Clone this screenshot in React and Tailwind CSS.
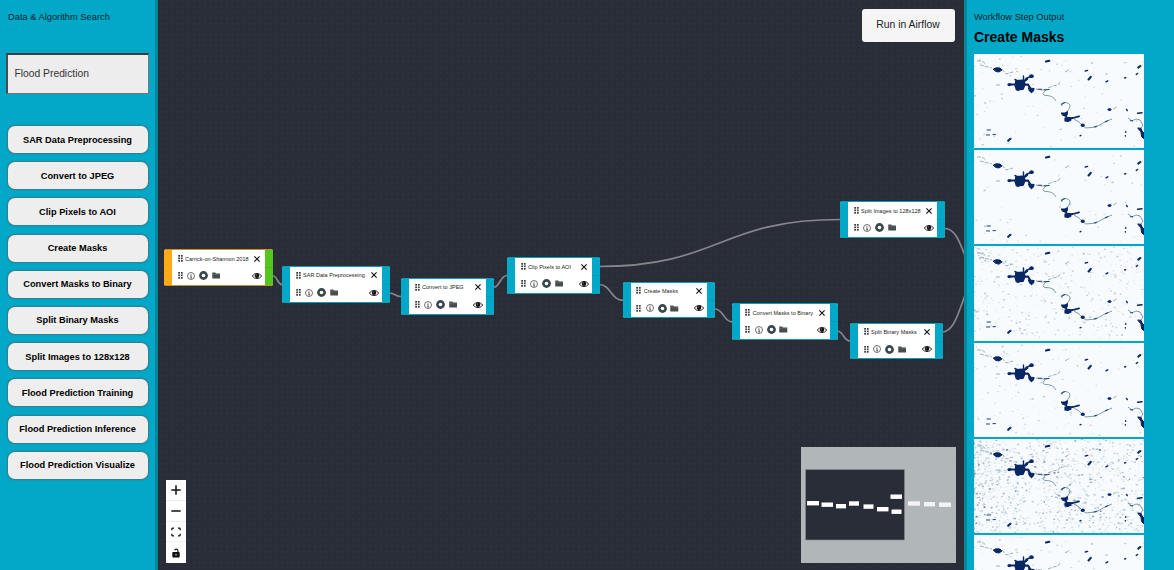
import React from "react";

const steps = [
  "SAR Data Preprocessing",
  "Convert to JPEG",
  "Clip Pixels to AOI",
  "Create Masks",
  "Convert Masks to Binary",
  "Split Binary Masks",
  "Split Images to 128x128",
  "Flood Prediction Training",
  "Flood Prediction Inference",
  "Flood Prediction Visualize",
];

// Positions are relative to the workflow canvas.
const nodes = [
  { label: "Carrick-on-Shannon 2018", x: 6, y: 249.3, w: 109, source: true },
  { label: "SAR Data Preprocessing", x: 124, y: 266, w: 107.5 },
  { label: "Convert to JPEG", x: 243, y: 278, w: 92.5 },
  { label: "Clip Pixels to AOI", x: 349, y: 257.3, w: 92.5 },
  { label: "Create Masks", x: 464.7, y: 281.7, w: 92.5 },
  { label: "Convert Masks to Binary", x: 573.5, y: 303.3, w: 106 },
  { label: "Split Images to 128x128", x: 682, y: 201.3, w: 105 },
  { label: "Split Binary Masks", x: 692, y: 322.7, w: 92.5 },
];

const edges = [
  [115, 276, 124, 284.5],
  [231, 293, 243, 296.5],
  [335, 287.5, 349, 275.5],
  [441, 266.5, 682, 219.5],
  [441, 284.5, 465, 300.3],
  [557, 309, 574, 321.8],
  [679, 331, 692, 341],
  [787, 228.5, 824, 275],
  [784, 332, 824, 275],
];

function edgePath([x1, y1, x2, y2]) {
  const m = (x1 + x2) / 2;
  return `M${x1} ${y1}C${m} ${y1} ${m} ${y2} ${x2} ${y2}`;
}

function Grip() {
  return (
    <svg viewBox="0 0 5 7" className="h-[7px] w-[5px] shrink-0" fill="#3b4144">
      {[0, 2.5, 5].map((y) => (
        <g key={y}>
          <rect x="0.2" y={y} width="1.8" height="1.7" />
          <rect x="2.9" y={y} width="1.8" height="1.7" />
        </g>
      ))}
    </svg>
  );
}

function Node({ node }) {
  const { label, x, y, w, source } = node;
  return (
    <div
      className={`absolute flex h-[36.5px] overflow-hidden rounded-[2px] border-y bg-white ${source ? "border-[#c98f2a]" : "border-[#059fb8]"}`}
      style={{ left: x, top: y, width: w }}
    >
      <div className={`w-2 shrink-0 ${source ? "bg-[#fcab17]" : "bg-[#02a8c7]"}`} />
      <div className="flex min-w-0 flex-1 flex-col pr-[5px] pl-[5.5px]">
        <div className="flex h-[17.5px] items-center">
          <Grip />
          <span className="ml-[2.5px] text-[5.5px] leading-[8px] tracking-[0.005em] whitespace-nowrap text-[#222]">{label}</span>
          <svg viewBox="0 0 6 6" className="ml-auto h-[6px] w-[6px] shrink-0" stroke="#111" strokeWidth="1.1">
            <path d="M0.4 0.4L5.6 5.6M5.6 0.4L0.4 5.6" />
          </svg>
        </div>
        <div className="flex h-[19px] items-center">
          <Grip />
          <svg viewBox="0 0 8 8" className="ml-[4.5px] h-2 w-2 shrink-0">
            <circle cx="4" cy="4" r="3.5" fill="#fff" stroke="#4a4f51" strokeWidth="0.8" />
            <path d="M3.4 3.5H4.1V5.8M3.2 5.9H5M4 1.8V2.6" fill="none" stroke="#333" strokeWidth="0.8" />
          </svg>
          <svg viewBox="0 0 9 9" className="ml-[4px] h-[9px] w-[9px] shrink-0">
            <circle cx="4.5" cy="4.5" r="4.4" fill="#3a474b" />
            <circle cx="4.5" cy="4.5" r="1.8" fill="#fff" />
          </svg>
          <svg viewBox="0 0 8 7" className="ml-[3.5px] h-[7px] w-[8.5px] shrink-0" fill="#474d4f">
            <path d="M0 0.4H3L3.8 1.4H8V6.6H0Z" />
            <path d="M0.3 2.1H7.7" stroke="#8b9092" strokeWidth="0.4" />
          </svg>
          <svg viewBox="0 0 10 8" className="-mr-[2px] ml-auto h-2 w-[10px] shrink-0">
            <path d="M0.4 4.1C2.4 0.6 7.6 0.6 9.6 4.1C7.6 7.4 2.4 7.4 0.4 4.1Z" fill="#fff" stroke="#111" strokeWidth="0.9" />
            <circle cx="5" cy="3.8" r="2.3" fill="#111" />
            <circle cx="4.2" cy="3" r="0.6" fill="#aaa" />
          </svg>
        </div>
      </div>
      <div className={`flex w-2 shrink-0 flex-col ${source ? "bg-[#54c71e]" : "bg-[#02a8c7]"}`}>
        <div className={`h-[18px] border-b ${source ? "border-[#4cb51e]" : "border-[#059db9]"}`} />
      </div>
    </div>
  );
}

function speckles(seed, count) {
  let s = seed;
  const next = () => {
    s = (s * 16807) % 2147483647;
    return s / 2147483647;
  };
  for (let i = 0; i < 5; i++) next();
  return Array.from({ length: count }, () => {
    const u = next();
    return {
      x: (next() < 0.4 ? u * u : u) * 170,
      y: next() * 94,
      r: 0.35 + next() * 0.6,
      o: 0.08 + next() * 0.32,
    };
  });
}

function MaskImage({ seed, noise, dark }) {
  return (
    <svg viewBox="0 0 170 94.3" preserveAspectRatio="none" className="h-[94.3px] w-[170px] shrink-0 bg-[#f8fbfe]">
      {speckles(seed, noise).map((p, i) => (
        <ellipse
          key={i}
          cx={p.x}
          cy={p.y}
          rx={p.r * 1.4}
          ry={p.r}
          fill={dark && i % 14 === 0 ? "#12366f" : "#4b7a92"}
          opacity={dark && i % 14 === 0 ? p.o + 0.25 : p.o}
        />
      ))}
      {/* faint tributaries */}
      <g fill="none" stroke="#4f7488" strokeWidth="0.9" strokeDasharray="4 1.2" opacity="0.6">
        <path d="M3 7L8 7L12 10M6 11L10 12L18 14M28 15L32 20L39 18M22 31L27 31M91 18L96 15" />
        <path d="M74 34L79 32L84 31L86 28M139 55L143 53" />
      </g>
      {/* main river */}
      <g fill="none" stroke="#4f7488" strokeWidth="0.95" opacity="0.75">
        <path d="M62 35L68 36L76 35.5M72 36Q67 40 71 41.5Q79 41 82 47M88 52Q87 48 92 48.5Q98 50 95 55L92 59M100 65L105 68L109 72L112 74L122 73L131 68L138 65" />
        <path d="M154 64L158 67L162 65L166 66L169 71L167 74" />
      </g>
      <path fill="none" stroke="#14356b" strokeWidth="1.1" opacity="0.85" d="M64 35.3H68M70 35.8L75 35.5M87 50.5L91 48.5M120 73L123 72M131 68L134 66.5M156 66.5L159 67" />
      {/* lakes */}
      <g fill="#092665" stroke="#092665" strokeLinecap="round" strokeLinejoin="round">
        <path strokeWidth="1" d="M19.5 15L22 13.8L26 14L28 16L25 18L22 17.5Z" />
        <path strokeWidth="1.8" d="M42 27L48.5 26.5L51 30L49 35L42.5 35.5L41.5 32Z" />
        <path fill="none" strokeWidth="2.2" d="M36 30.5L42 30.5M49 28L53 25M49 31L54 30.5L56 34" />
        <path fill="none" strokeWidth="1.4" d="M49.5 26.5L49.5 22M44 27L41 25.5M46 35L44 36.5M52 24.5L58 22" />
        <ellipse cx="57.5" cy="22.2" rx="2.3" ry="1.9" stroke="none" />
        <ellipse cx="35.3" cy="30.6" rx="1.9" ry="1.7" stroke="none" />
        <path strokeWidth="1.2" d="M54.5 34L60 34.5L59.5 36.5L57.5 38.5L55.5 36.5Z" />
        <path strokeWidth="1.2" d="M87.5 59L91 59L93.5 57.8L93 61L91 62L88.5 61Z" />
        <path strokeWidth="1.2" d="M91 64L96 63.5L97 66L94 67.5L91 67Z" />
        <path fill="none" strokeWidth="1.8" d="M91 61L93.5 64.5L99 64L105 62.4" />
        <ellipse cx="108.7" cy="71.3" rx="2" ry="1.8" stroke="none" />
        <ellipse cx="135.5" cy="55.6" rx="2" ry="1.3" stroke="none" />
        <path fill="none" strokeWidth="2.1" d="M72 7.5L75.3 6.8M114.6 25.5L116.8 22.8M34.2 86.8L36.4 84.8M164.3 13.6L166.3 12" />
        <path fill="none" strokeWidth="1.4" d="M111.3 17L113.6 16.4M132 27.8L133.8 26.8M162.3 20.4L163.6 19.5M163.6 59.3L168 58.8M150.6 24L151.8 23.6M152.5 55.4L153.3 56.6M106 81.8L107 81.4" />
        <path fill="none" strokeWidth="0.9" d="M13 76H16.5M12.5 81H15.5M19 80.6H21.5" />
        <path fill="none" strokeWidth="1.5" d="M151.7 77.8V78.3M151.4 81.7V82" />
        <path strokeWidth="1" d="M164 74L167 74.3L168 77L170 79V85L167.5 82.5L167 78L164.5 75Z" />
      </g>
    </svg>
  );
}

const outputs = [
  { seed: 910001, noise: 90 },
  { seed: 1370077, noise: 55 },
  { seed: 5570333, noise: 420 },
  { seed: 8110999, noise: 120 },
  { seed: 29030111, noise: 1300, dark: true },
  { seed: 910001, noise: 90 },
];

const miniNodes = [
  [807, 501, 12],
  [821.5, 502.5, 11.5],
  [836, 504, 10],
  [849, 501.3, 10],
  [863.5, 504.4, 10],
  [877, 507, 11.5],
  [890.5, 494.5, 11.5],
  [891.5, 509.5, 10],
  [908, 501.3, 12],
  [924, 502, 11],
  [939, 502.5, 12],
];

function MiniMap() {
  return (
    <svg viewBox="801 447 155 116" className="absolute top-[447px] left-[642.5px] h-[116px] w-[155px]">
      <rect x="801" y="447" width="155" height="116" fill="#b1b6b9" />
      <rect x="805.5" y="469.5" width="99" height="70.5" fill="#292d38" stroke="#8a8e93" strokeWidth="0.6" />
      {miniNodes.map(([x, y, w]) => (
        <rect key={x} x={x} y={y} width={w} height="4.4" fill={x > 905 ? "#f2f3f4" : "#fff"} />
      ))}
    </svg>
  );
}

function Controls() {
  return (
    <div className="absolute top-[480px] left-[7.5px] flex w-5 flex-col bg-white">
      <button className="flex h-[21px] items-center justify-center border-b border-[#eee]">
        <svg viewBox="0 0 10 10" className="h-[10px] w-[10px]" stroke="#111" strokeWidth="1.5"><path d="M5 0.3V9.7M0.3 5H9.7" /></svg>
      </button>
      <button className="flex h-[21px] items-center justify-center border-b border-[#eee]">
        <svg viewBox="0 0 10 10" className="h-[10px] w-[10px]" stroke="#111" strokeWidth="1.5"><path d="M0.3 5H9.7" /></svg>
      </button>
      <button className="flex h-[20px] items-center justify-center border-b border-[#eee]">
        <svg viewBox="0 0 10 10" className="h-[10px] w-[10px]" fill="none" stroke="#111" strokeWidth="1.3">
          <path d="M0.8 3.2V2Q0.8 1.2 1.6 1.2H3M7 1.2H8.4Q9.2 1.2 9.2 2V3.2M9.2 6.8V8Q9.2 8.8 8.4 8.8H7M3 8.8H1.6Q0.8 8.8 0.8 8V6.8" />
        </svg>
      </button>
      <button className="flex h-[21px] items-center justify-center">
        <svg viewBox="0 0 8 10" className="h-[10px] w-2">
          <rect x="0.3" y="3.9" width="7.4" height="5.6" rx="0.8" fill="#111" />
          <path d="M5.9 4V2.6Q5.7 1 4.1 1.1Q2.9 1.3 2.7 2.3" fill="none" stroke="#111" strokeWidth="1.1" />
          <circle cx="4" cy="6.7" r="0.7" fill="#fff" />
        </svg>
      </button>
    </div>
  );
}

export default function App() {
  return (
    <div className="flex h-[570px] w-[1174px] overflow-hidden bg-[#02a8c7] font-['Liberation_Sans',Arial,sans-serif] text-[#111]">
      <aside className="flex w-[158px] shrink-0 flex-col border-r-[3px] border-[#07859b]">
        <p className="mt-[11px] ml-[8px] text-[9.3px] leading-[12px] whitespace-nowrap text-[#06252c]">Data &amp; Algorithm Search</p>
        <input
          type="text"
          defaultValue="Flood Prediction"
          className="mt-[30px] ml-[5.5px] h-[41px] w-[143.5px] border-t-[2px] border-r border-b border-l-[2px] border-[#77777a] border-t-[#3c3f42] border-l-[#4a4b4e] bg-[#ededed] pr-[8px] pb-[2px] pl-[7px] text-[10.3px] text-[#333] outline-none"
        />
        <div className="mt-[32px] ml-[7.5px] flex w-[140px] flex-col gap-[9.2px]">
          {steps.map((s) => (
            <button key={s} className="h-[27px] shrink-0 rounded-[7px] bg-[#eeeeee] text-[9.25px] leading-[12px] font-bold whitespace-nowrap text-black shadow-[0_0_1.5px_0.5px_#3c7a86]">
              {s}
            </button>
          ))}
        </div>
      </aside>

      <main className="relative w-[806px] shrink-0 overflow-hidden bg-[#292d38]">
        <svg className="absolute inset-0 h-full w-full">
          <defs>
            <pattern id="dots" width="5.5" height="5.5" patternUnits="userSpaceOnUse">
              <circle cx="3" cy="1.4" r="0.6" fill="#363b45" />
            </pattern>
          </defs>
          <rect width="100%" height="100%" fill="url(#dots)" />
          {edges.map((e, i) => (
            <path key={i} d={edgePath(e)} fill="none" stroke="#85878c" strokeWidth="1.7" />
          ))}
        </svg>
        {nodes.map((n) => (
          <Node key={n.label} node={n} />
        ))}
        <button className="absolute top-[9px] left-[703.5px] h-[32.5px] w-[93px] rounded-[3px] bg-[#f5f5f5] pb-px text-[10.4px] text-[#222]">
          Run in Airflow
        </button>
        <Controls />
        <MiniMap />
      </main>

      <aside className="flex flex-1 flex-col border-l-[3px] border-[#07859b] pl-[7px]">
        <p className="mt-[11px] text-[9.3px] leading-[12px] text-[#06252c]">Workflow Step Output</p>
        <h1 className="mt-[6px] text-[14px] leading-[16px] font-bold text-black">Create Masks</h1>
        <div className="mt-[8.7px] flex h-[517px] flex-col gap-[2px] overflow-hidden">
          {outputs.map((o, i) => (
            <MaskImage key={i} {...o} />
          ))}
        </div>
      </aside>
    </div>
  );
}
